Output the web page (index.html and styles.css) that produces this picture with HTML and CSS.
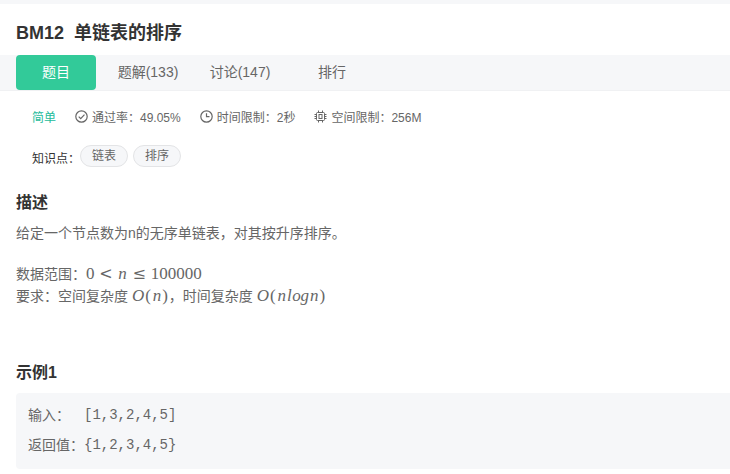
FILE: index.html
```html
<!DOCTYPE html>
<html lang="zh-CN">
  <head>
    <meta charset="UTF-8" />
    <meta name="viewport" content="width=device-width, initial-scale=1.0" />
    <title>BM12 单链表的排序</title>
    <link rel="stylesheet" href="styles.css">
  </head>
  <body>
    <div class="top-strip"></div>
    <h1 class="title"><span>BM12</span><span>单链表的排序</span></h1>
    <nav class="tabs">
      <a class="tab active">题目</a>
      <a class="tab">题解(133)</a>
      <a class="tab">讨论(147)</a>
      <a class="tab">排行</a>
    </nav>

    <div class="meta">
      <span class="level">简单</span>
      <span class="meta-item">
        <svg class="icon" viewBox="0 0 13 13">
          <circle cx="6.5" cy="6.5" r="5.7" />
          <path d="M3.7 6.6l2 2 3.8-4" />
        </svg>
        通过率：49.05%
      </span>
      <span class="meta-item">
        <svg class="icon" viewBox="0 0 13 13">
          <circle cx="6.5" cy="6.5" r="5.7" />
          <path d="M6.5 3.2v3.5h3" />
        </svg>
        时间限制：2秒
      </span>
      <span class="meta-item memory">
        <svg class="icon" viewBox="0 0 13 13">
          <rect x="2.5" y="2.5" width="8" height="8" rx="1" />
          <rect x="5" y="4.5" width="3" height="4" />
          <path d="M4.5 .5v2M8.5 .5v2M4.5 10.5v2M8.5 10.5v2M.5 4.5h2M.5 6.5h2M.5 8.5h2M10.5 4.5h2M10.5 6.5h2M10.5 8.5h2" />
        </svg>
        空间限制：256M
      </span>
    </div>

    <div class="topics">
      <span class="topics-label">知识点：</span>
      <a class="tag">链表</a>
      <a class="tag">排序</a>
    </div>

    <main class="content">
      <h2>描述</h2>
      <p class="intro">给定一个节点数为n的无序单链表，对其按升序排序。</p>
      <p class="limit">数据范围：<span class="math"><span>0</span><span class="rel">&lt;</span><i class="n">n</i><span class="rel">≤</span><span>100000</span></span></p>
      <p class="limit">要求：空间复杂度&nbsp;<span class="math"><i class="big-o">O</i><span class="paren">(</span><i class="n">n</i><span class="paren">)</span></span>，时间复杂度&nbsp;<span class="math"><i class="big-o">O</i><span class="paren">(</span><i class="n">n</i><i class="l">l</i><i class="o">o</i><i class="g">g</i><i class="n">n</i><span class="paren">)</span></span></p>

      <h2 class="sample-title">示例1</h2>
      <div class="sample">
        <div class="sample-row"><span class="sample-label">输入：</span><code>[1,3,2,4,5]</code></div>
        <div class="sample-row"><span class="sample-label">返回值：</span><code>{1,2,3,4,5}</code></div>
      </div>
    </main>
  </body>
</html>
```
FILE: styles.css
```css
* {
  box-sizing: border-box;
}
body {
  margin: 0;
  font-family: "Liberation Sans", "Noto Sans CJK SC", sans-serif;
  font-size: 14px;
  color: #666;
  background-color: #fff;
  overflow: hidden;
}
h1,
h2,
p {
  margin: 0;
}
.top-strip {
  height: 4px;
  background-color: #f6f7f9;
}
.title {
  display: flex;
  gap: 10px;
  height: 51px;
  padding: 0 16px;
  line-height: 59px;
  font-size: 18px;
  color: #333;
}
.tabs {
  display: flex;
  gap: 12px;
  height: 36px;
  padding-left: 16px;
  background-color: #f6f7f9;
  border-bottom: 1px solid #f0f1f3;
}
.tab {
  width: 80px;
  height: 35px;
  line-height: 35px;
  text-align: center;
}
.tab.active {
  color: #fff;
  background-color: #32ca99;
  border-radius: 4px;
}
.meta {
  display: flex;
  align-items: center;
  gap: 19px;
  height: 20px;
  margin-top: 15px;
  padding-left: 32px;
  font-size: 12px;
}
.level {
  color: #25bb9b;
}
.meta-item {
  display: flex;
  align-items: center;
  gap: 4px;
}
.icon {
  width: 13px;
  height: 13px;
  fill: none;
  stroke: #666;
  stroke-width: 1.2;
}
.memory .icon {
  stroke-width: 1;
}
.topics {
  display: flex;
  gap: 5px;
  margin-top: 19px;
  padding-left: 32px;
  font-size: 12px;
}
.topics-label {
  margin-right: -5px;
  height: 26px;
  line-height: 28px;
  color: #333;
}
.tag {
  width: 48px;
  height: 22px;
  line-height: 20px;
  text-align: center;
  background-color: #f6f7f9;
  border: 1px solid #e3e4e6;
  border-radius: 11px;
}
.content {
  padding-left: 16px;
}
h2 {
  margin-top: 20px;
  font-size: 16px;
  line-height: 24px;
  color: #333;
}
.intro {
  margin: 7px 0 19px;
  line-height: 22px;
}
.limit {
  height: 22px;
  line-height: 22px;
}
.math {
  display: inline-flex;
  font-family: "Liberation Serif", serif;
  font-size: 17px;
  line-height: 20px;
}
.rel {
  width: 23px;
  font-family: "DejaVu Serif", serif;
  font-size: 16px;
  text-align: center;
}
.big-o {
  width: 0.79em;
}
.paren {
  width: 0.39em;
}
.n {
  width: 0.6em;
  text-align: center;
}
.l {
  width: 0.32em;
}
.o {
  width: 0.485em;
}
.g {
  width: 0.51em;
}
.sample-title {
  margin-top: 54px;
}
.sample {
  height: 76px;
  margin-top: 8px;
  padding: 7px 12px;
  background-color: #f6f7f9;
  border-radius: 4px 0 0 4px;
}
.sample-row {
  display: flex;
  height: 30px;
  line-height: 30px;
}
.sample-label {
  width: 56px;
}
code {
  font-family: "Liberation Mono", monospace;
  font-size: 14px;
}
```
